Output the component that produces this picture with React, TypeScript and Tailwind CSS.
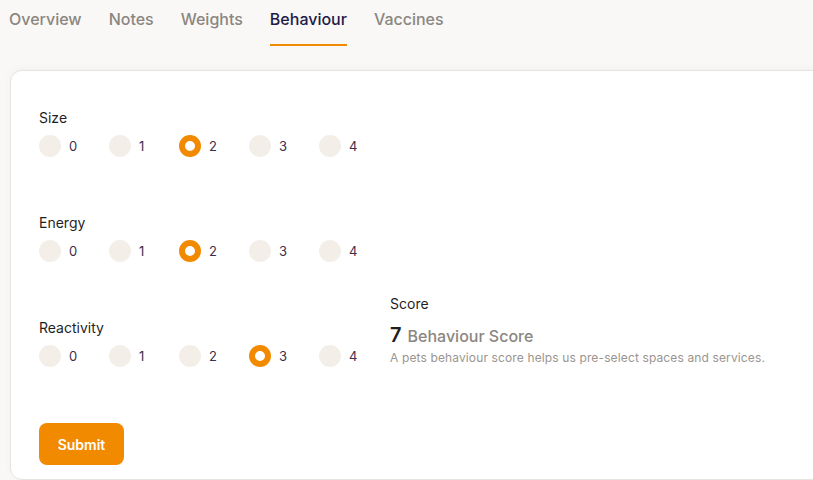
import React, { useState } from "react";

const tabs = ["Overview", "Notes", "Weights", "Behaviour", "Vaccines"];

function RadioRow({ value, onChange }: { value: number; onChange: (v: number) => void }) {
  return (
    <div className="flex items-center gap-8">
      {[0, 1, 2, 3, 4].map((n) => (
        <button key={n} type="button" onClick={() => onChange(n)} className="flex items-center gap-2">
          {value === n ? (
            <span className="block h-[22px] w-[22px] rounded-full border-[6px] border-[#f28a00] bg-white" />
          ) : (
            <span className="block h-[22px] w-[22px] rounded-full bg-[#f3efe8]" />
          )}
          <span className="text-[13px] leading-5 text-[#3d2f4a] w-[8px] text-left">{n}</span>
        </button>
      ))}
    </div>
  );
}

export default function App() {
  const [size, setSize] = useState(2);
  const [energy, setEnergy] = useState(2);
  const [reactivity, setReactivity] = useState(3);

  const groups: [string, number, (v: number) => void][] = [
    ["Size", size, setSize],
    ["Energy", energy, setEnergy],
    ["Reactivity", reactivity, setReactivity],
  ];

  return (
    <div
      className="h-[480px] w-[813px] overflow-hidden bg-[#f9f8f6]"
      style={{ fontFamily: "Inter, 'Noto Sans', sans-serif" }}
    >
      <div className="flex gap-[27px] pl-[9px] pt-[7px]">
        {tabs.map((t) => (
          <div
            key={t}
            className={
              t === "Behaviour"
                ? "border-b-[2px] border-[#f28a00] pb-[13px] text-[16px] font-medium leading-6 text-[#1e1b4b]"
                : "border-b-[2px] border-transparent pb-[13px] text-[16px] font-medium leading-6 text-[#8b8680]"
            }
          >
            {t}
          </div>
        ))}
      </div>
      <div className="ml-[10px] mt-[24px] h-[410px] w-[830px] rounded-[12px] border border-[#e7e4df] bg-white pl-[28px] pt-[37px] shadow-[0_-2px_8px_rgba(0,0,0,0.03)]">
        <div className="flex items-end">
          <div className="flex w-[351px] flex-col gap-[56px]">
            {groups.map(([label, v, set]) => (
              <div key={label} className="flex flex-col gap-[7px]">
                <div className="text-[14px] leading-5 text-[#1f1f1f]">{label}</div>
                <RadioRow value={v} onChange={set} />
              </div>
            ))}
          </div>
          <div className="flex flex-col pb-[1px]">
            <div className="text-[14px] leading-5 text-[#1f1f1f]">Score</div>
            <div className="mt-[7px] flex items-baseline gap-[6px] leading-7">
              <span className="text-[20px] font-semibold text-[#1f1f1f]">7</span>
              <span className="text-[16px] font-medium text-[#8b8680]">Behaviour Score</span>
            </div>
            <div className="text-[12px] leading-4 tracking-[0.13px] text-[#9a958f]">
              A pets behaviour score helps us pre-select spaces and services.
            </div>
          </div>
        </div>
        <button
          type="button"
          className="mt-[56px] h-[42px] w-[85px] rounded-[8px] bg-[#f28a00] text-[14px] font-semibold text-white"
        >
          Submit
        </button>
      </div>
    </div>
  );
}
